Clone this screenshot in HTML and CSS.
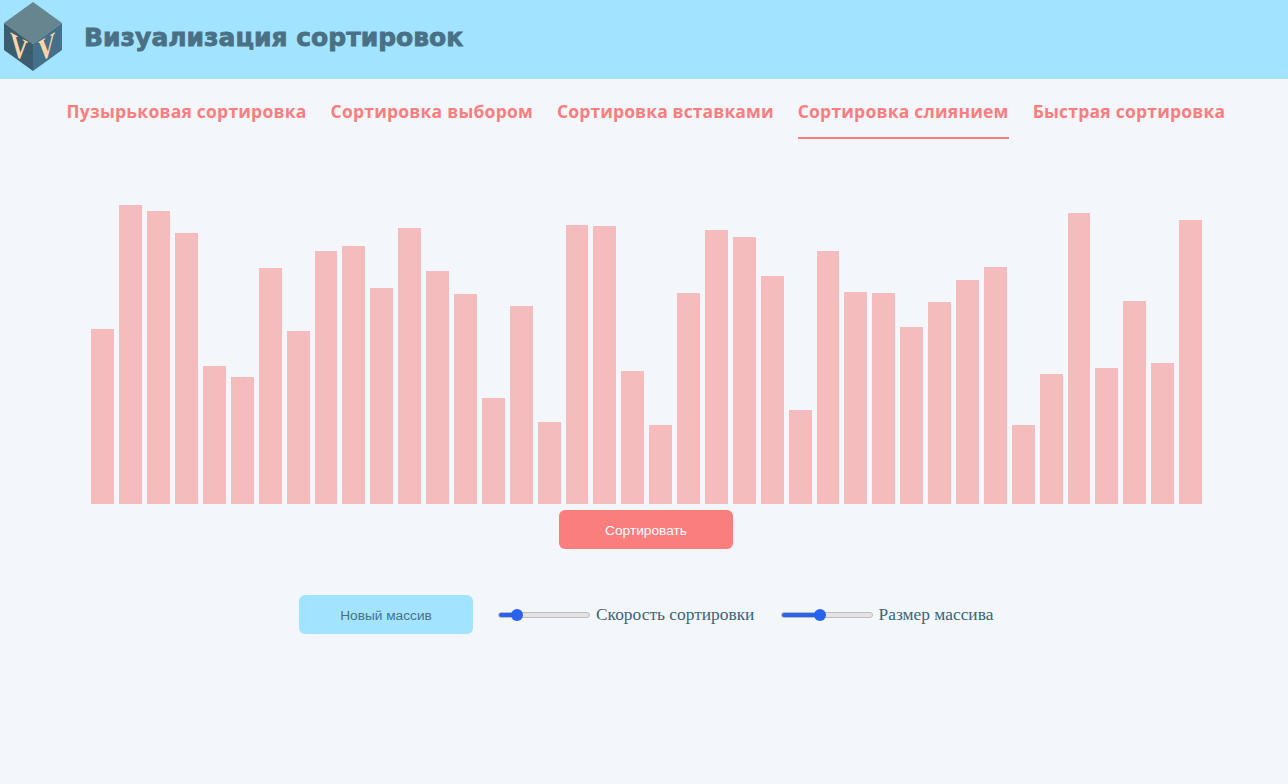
FILE: index.html
```html
<!DOCTYPE html>
<html lang="ru">
<head>
	<meta charset="UTF-8">
	<title>Визуализация сортировок</title>
	<link rel="stylesheet" href="styles.css">
</head>
<body>
<header class="header">
	<svg class="logo" width="58" height="70" viewBox="0 0 58 70">
		<polygon points="29,1 58,22 29,43 0,22" fill="#66858f"/>
		<polygon points="0,22 29,43 29,70 0,49" fill="#3b5d6d"/>
		<polygon points="58,22 29,43 29,70 58,49" fill="#45708a"/>
		<text class="logo-v" transform="matrix(.78 .43 0 1 6 52)">V</text>
		<text class="logo-v" transform="matrix(.74 -.43 0 1 34 62)">V</text>
	</svg>
	<h1 class="title">Визуализация сортировок</h1>
</header>

<nav class="tabs">
	<a class="tab">Пузырьковая сортировка</a>
	<a class="tab">Сортировка выбором</a>
	<a class="tab">Сортировка вставками</a>
	<a class="tab active">Сортировка слиянием</a>
	<a class="tab">Быстрая сортировка</a>
</nav>

<div class="bars">
	<div class="bar" style="height:175px"></div>
	<div class="bar" style="height:299px"></div>
	<div class="bar" style="height:293px"></div>
	<div class="bar" style="height:271px"></div>
	<div class="bar" style="height:138px"></div>
	<div class="bar" style="height:127px"></div>
	<div class="bar" style="height:236px"></div>
	<div class="bar" style="height:173px"></div>
	<div class="bar" style="height:253px"></div>
	<div class="bar" style="height:258px"></div>
	<div class="bar" style="height:216px"></div>
	<div class="bar" style="height:276px"></div>
	<div class="bar" style="height:233px"></div>
	<div class="bar" style="height:210px"></div>
	<div class="bar" style="height:106px"></div>
	<div class="bar" style="height:198px"></div>
	<div class="bar" style="height:82px"></div>
	<div class="bar" style="height:279px"></div>
	<div class="bar" style="height:278px"></div>
	<div class="bar" style="height:133px"></div>
	<div class="bar" style="height:79px"></div>
	<div class="bar" style="height:211px"></div>
	<div class="bar" style="height:274px"></div>
	<div class="bar" style="height:267px"></div>
	<div class="bar" style="height:228px"></div>
	<div class="bar" style="height:94px"></div>
	<div class="bar" style="height:253px"></div>
	<div class="bar" style="height:212px"></div>
	<div class="bar" style="height:211px"></div>
	<div class="bar" style="height:177px"></div>
	<div class="bar" style="height:202px"></div>
	<div class="bar" style="height:224px"></div>
	<div class="bar" style="height:237px"></div>
	<div class="bar" style="height:79px"></div>
	<div class="bar" style="height:130px"></div>
	<div class="bar" style="height:291px"></div>
	<div class="bar" style="height:136px"></div>
	<div class="bar" style="height:203px"></div>
	<div class="bar" style="height:141px"></div>
	<div class="bar" style="height:284px"></div>
</div>

<div class="sort-row">
	<button class="btn btn-sort">Сортировать</button>
</div>

<div class="controls">
	<button class="btn btn-new">Новый массив</button>
	<label class="range-label"><input type="range" class="range" min="0" max="100" value="16" style="--fill:19px">Скорость сортировки</label>
	<label class="range-label"><input type="range" class="range" min="0" max="100" value="41" style="--fill:39px">Размер массива</label>
</div>
</body>
</html>
```

FILE: styles.css
```css
*{ margin:0; padding:0; box-sizing:border-box; }
body{ background:#f3f7fc; font-family:"Liberation Sans",sans-serif; height:784px; overflow:hidden; }

.header{ height:79px; background:#a2e4ff; display:flex; align-items:flex-start; padding:1px 0 0 4px; }
.logo{ display:block; }
.logo-v{ font-family:"Liberation Serif",serif; font-weight:bold; font-size:32px; fill:#ffd5a8; }
.title{ margin:22px 0 0 22px; font-family:"DejaVu Sans",sans-serif; font-weight:700; font-size:25px; line-height:30px; color:#4a7085; white-space:nowrap; -webkit-text-stroke:.8px #4a7085; }

.tabs{ display:flex; justify-content:center; gap:24px; height:60px; padding-left:4px; }
.tab{ display:block; height:60px; padding-top:22px; font-family:"Open Sans",sans-serif; font-weight:700; font-size:17.5px; letter-spacing:.22px; line-height:21px; color:#fb7e7f; white-space:nowrap; border-bottom:2px solid transparent; }
.tab:nth-child(3){ letter-spacing:.12px; }
.tab.active{ border-bottom-color:#fb7e7f; }

.bars{ display:flex; align-items:flex-end; gap:5px; height:307px; margin:58px 0 0 91.42px; }
.bar{ width:22.9px; background:#f4bcbd; }

.sort-row{ display:flex; justify-content:center; margin-top:6px; padding-left:4px; }
.btn{ display:block; width:174px; height:39px; padding-top:2px; border:0; border-radius:6px; font-family:"Liberation Sans",sans-serif; font-size:13.7px; }
.btn-sort{ background:#fb7e7f; color:#fff; }
.btn-new{ background:#a2e4ff; color:#4a7085; }

.controls{ display:flex; align-items:center; margin-top:46px; margin-left:299px; }
.range-label{ display:flex; align-items:center; margin-left:25px; font-family:"Liberation Serif",serif; font-size:17.4px; color:#3d6478; }
.range-label + .range-label{ margin-left:26.1px; }
.range{ -webkit-appearance:none; appearance:none; width:92px; height:12px; margin-right:6px; background:none; }
.range::-webkit-slider-runnable-track{ height:6px; border:1px solid #bdbdbd; border-radius:3px; background:linear-gradient(to right,#2a62f0 var(--fill),#e4e4e4 var(--fill)); }
.range::-webkit-slider-thumb{ -webkit-appearance:none; width:12px; height:12px; margin-top:-4px; border-radius:50%; background:#2a62f0; }
```
